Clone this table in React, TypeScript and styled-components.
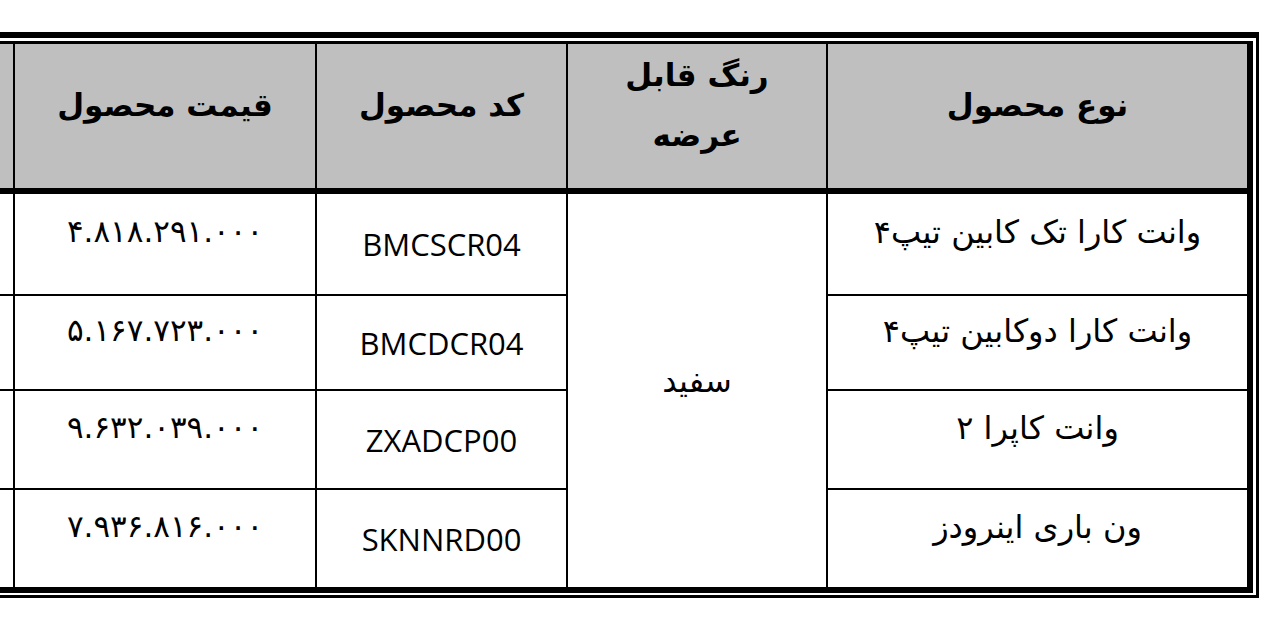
import styled, { createGlobalStyle } from "styled-components";

const GlobalStyle = createGlobalStyle`
  html, body {
    margin: 0;
    padding: 0;
    background: #fff;
    overflow: hidden;
  }
`;

type Row = { type: string; code: string; price: string };

const rows: Row[] = [
  { type: "وانت کارا تک کابین تیپ۴", code: "BMCSCR04", price: "۴.۸۱۸.۲۹۱.۰۰۰" },
  { type: "وانت کارا دوکابین تیپ۴", code: "BMCDCR04", price: "۵.۱۶۷.۷۲۳.۰۰۰" },
  { type: "وانت کاپرا ۲", code: "ZXADCP00", price: "۹.۶۳۲.۰۳۹.۰۰۰" },
  { type: "ون باری اینرودز", code: "SKNNRD00", price: "۷.۹۳۶.۸۱۶.۰۰۰" },
];

const persian = `"DejaVu Sans", sans-serif`;

const Page = styled.div`
  height: 627px;
  padding-top: 32px;
  box-sizing: border-box;
`;

// thick-thin double frame round the table
const Frame = styled.div`
  box-sizing: border-box;
  width: 1396px;
  margin-left: -137px;
  border-top: 6px solid #000;
  border-right: 3px solid #000;
  border-bottom: 3px solid #000;
  padding: 3px 3px 2px 0;
`;

const Grid = styled.div`
  box-sizing: border-box;
  direction: rtl;
  display: grid;
  grid-template-columns: 421px 260px 251px 302px 150px;
  grid-template-rows: 150px 102px 95px 99px 97px;
  border-top: 3px solid #000;
  border-right: 6px solid #000;
  border-bottom: 6px solid #000;
`;

const Cell = styled.div<{ $bottom: number; $lift?: number; $edge?: boolean }>`
  box-sizing: border-box;
  display: flex;
  align-items: center;
  justify-content: center;
  text-align: center;
  border-left: ${(p) => (p.$edge ? "none" : "2px solid #000")};
  border-bottom: ${(p) => p.$bottom}px solid #000;
  padding-bottom: ${(p) => p.$lift ?? 0}px;
  color: #000;
`;

const HeadCell = styled(Cell)`
  background: #bfbfbf;
  font-family: ${persian};
  font-weight: bold;
  font-size: 31px;
  line-height: 1.95;
`;

const TypeCell = styled(Cell)`
  font-family: ${persian};
  font-size: 32px;
`;

const ColorCell = styled(Cell)`
  grid-row: span 4;
  font-family: ${persian};
  font-size: 32px;
`;

const CodeCell = styled(Cell)`
  font-family: "Open Sans", sans-serif;
  font-size: 31px;
  direction: ltr;
`;

const PriceCell = styled(Cell)`
  font-family: ${persian};
  font-size: 31px;
  letter-spacing: 1.7px;
`;

export default function App() {
  return (
    <Page>
      <GlobalStyle />
      <Frame>
        <Grid>
          <HeadCell $bottom={6} $lift={22}>نوع محصول</HeadCell>
          <HeadCell $bottom={6} $lift={22}>
            رنگ قابل
            <br />
            عرضه
          </HeadCell>
          <HeadCell $bottom={6} $lift={22}>کد محصول</HeadCell>
          <HeadCell $bottom={6} $lift={22}>قیمت محصول</HeadCell>
          <HeadCell $bottom={6} $edge />
          {rows.map((r, i) => {
            const last = i === rows.length - 1;
            const b = last ? 0 : 2;
            return [
              <TypeCell key={`t${i}`} $bottom={b} $lift={24}>
                {r.type}
              </TypeCell>,
              i === 0 ? (
                <ColorCell key="color" $bottom={0} $lift={20}>
                  سفید
                </ColorCell>
              ) : null,
              <CodeCell key={`c${i}`} $bottom={b}>
                {r.code}
              </CodeCell>,
              <PriceCell key={`p${i}`} $bottom={b} $lift={26}>
                {r.price}
              </PriceCell>,
              <Cell key={`e${i}`} $bottom={b} $edge />,
            ];
          })}
        </Grid>
      </Frame>
    </Page>
  );
}
